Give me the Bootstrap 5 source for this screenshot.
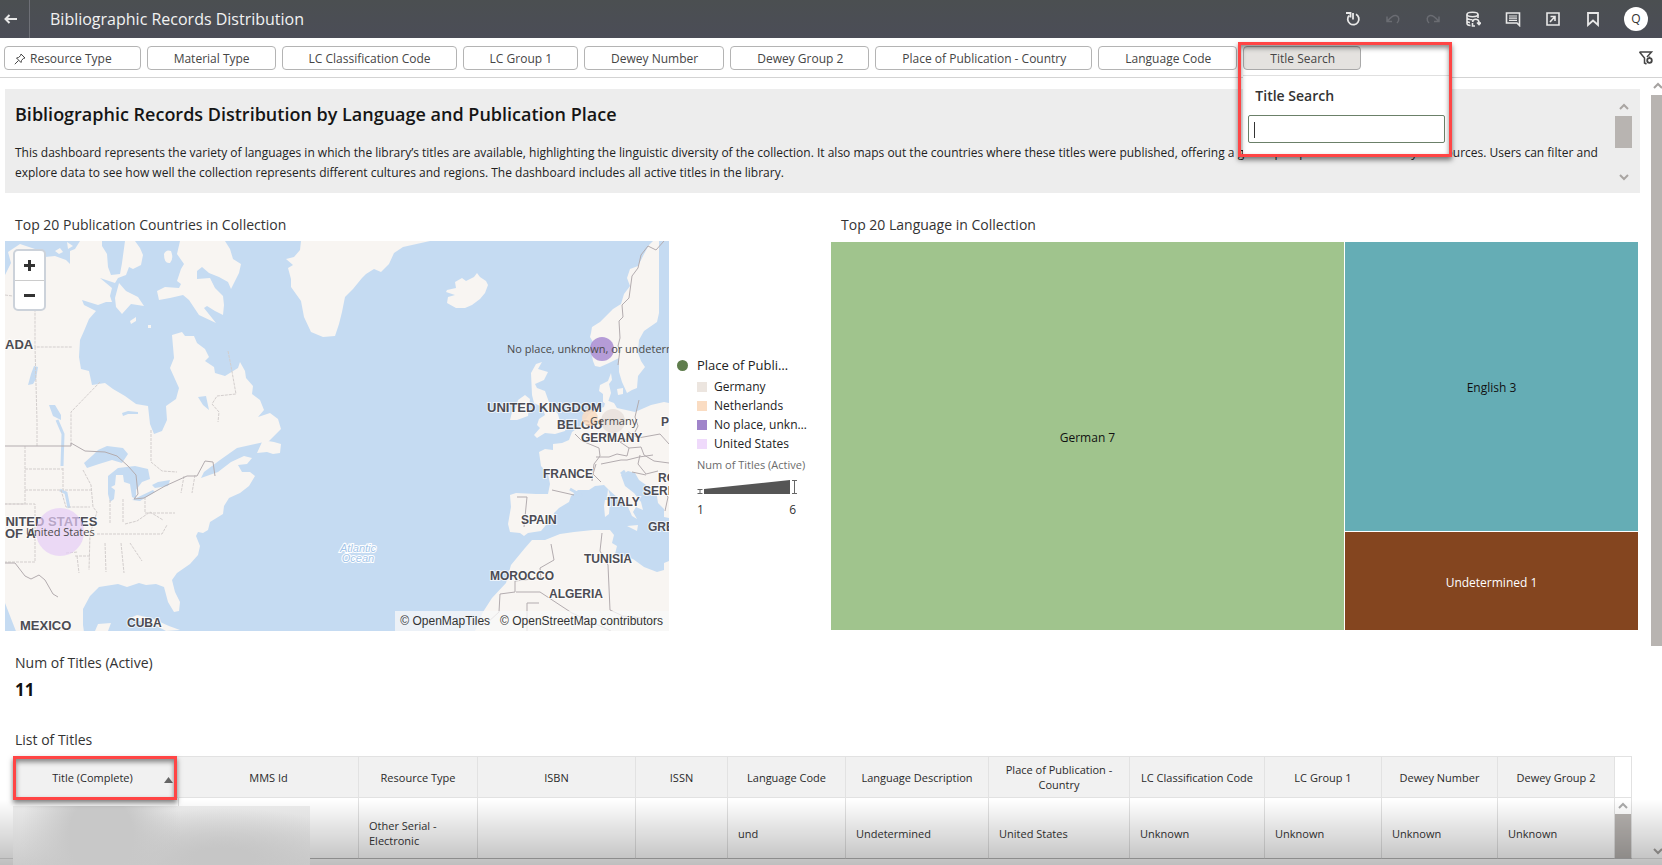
<!DOCTYPE html>
<html lang="en">
<head>
<meta charset="utf-8">
<meta name="viewport" content="width=device-width, initial-scale=1">
<title>Bibliographic Records Distribution</title>
<link href="https://cdn.jsdelivr.net/npm/bootstrap@5.3.0/dist/css/bootstrap.min.css" rel="stylesheet">
<style>
  :root { --ink:#222; --rule:#e2e2e2; --alert:#ff4545; }
  body { font-family:"Open Sans","Noto Sans",sans-serif; font-size:12px; line-height:20px; color:var(--ink); background:#fff; }
  button { font-family:inherit; }
  .topbar { height:38px; background:linear-gradient(#4b4f51,#4b4d57); color:#fff; }
  .topbar .btn { color:#e8e8e8; line-height:0; border:0; border-radius:0; }
  .back { width:29px; height:38px; text-align:left; }
  .topbar h1 { font-size:16px; line-height:38px; padding-left:20px; border-left:1px solid #6d6f76; color:#f2f2f2; }
  .tool { width:40px; height:36px; }
  .topbar .tool:disabled { color:#6a6c72; opacity:1; }
  .topbar .avatar { width:24px; height:24px; background:#fff; color:#333; font-size:12px; margin:0 14px 0 11px; }
  .filterbar { height:40px; padding:8px 8px 0 4px; gap:6px; border-bottom:1px solid #d3d3d3; }
  .chip { height:24px; padding:2px 25px 0 26px; font-size:12px; line-height:20px; color:#454545; border:1px solid #b4b4b4; border-radius:4px; background:#fff; white-space:nowrap; }
  .chip.pinned { padding:2px 28px 0 9px; }
  .chip.open { background:#e4e2df; border-color:#a9a9a9; }
  .search-wrap { position:relative; }
  .search-pop { position:absolute; top:29px; left:0; width:207px; height:80px; z-index:5; background:#fff; border-top:1px solid #e0e0e0; padding:10px 5px 0; }
  .search-pop label { font-size:14px; font-weight:600; line-height:20px; padding-left:7px; color:#333; }
  .search-pop input { height:28px; margin-top:9px; padding:0 5px; font-size:14px; border:1px solid #6b8069; border-radius:2px; box-shadow:none; }
  .callout { position:absolute; border:3px solid var(--alert); box-shadow:0 3px 5px rgba(0,0,0,.5), inset 0 3px 5px rgba(0,0,0,.45); pointer-events:none; z-index:6; }
  .callout-search { left:-5px; top:-4px; width:214px; height:115px; }
  .callout-title { left:0; top:0; width:164px; height:44px; }
  .caret-line { position:absolute; left:11px; top:46px; width:1px; height:16px; background:#333; }
  .board { padding:11px 22px 0 5px; }
  .about { height:104px; background:#ededed; padding:13px 8px 0 10px; }
  .about h2 { font-size:18px; font-weight:600; line-height:24px; color:#151515; margin-bottom:17px; }
  .about p { max-width:1590px; margin:0; }
  .vscroll { width:17px; color:#a9a5a2; }
  .thumb { background:#b8b4b1; }
  .viz-title { font-size:14px; font-weight:400; line-height:20px; color:#333; padding-left:10px; margin:0; }
  .charts { padding-top:22px; }
  .chart-left { flex:826 1 0; min-width:0; }
  .chart-right { flex:807 1 0; min-width:0; margin-right:2px; }
  .map-pane { flex:1 1 0; min-width:0; position:relative; }
  .chart-body { height:390px; margin-top:6px; }
  .map-pane svg.map { display:block; width:100%; height:390px; }
  .zoomer { position:absolute; left:8px; top:8px; width:33px; background:#fff; border:2px solid #ccd2da; border-radius:5px; }
  .zoomer button { height:29px; border:0; background:none; padding:0; line-height:0; color:#333; }
  .zoomer button + button { border-top:1px solid #ccc; }
  .credits { position:absolute; right:0; bottom:0; background:rgba(248,248,248,.75); font:12px/20px "Liberation Sans",sans-serif; padding:0 6px 0 5px; white-space:nowrap; }
  .credits a { color:#333; text-decoration:none; }
  .credits a + a { margin-left:10px; }
  .legend { flex:0 0 162px; padding:114px 0 0 8px; white-space:nowrap; }
  .legend-head { font-size:13px; }
  .dot { width:11px; height:11px; border-radius:50%; background:#5f7d4c; margin-right:9px; }
  .legend ul { margin:2px 0 0 20px; }
  .legend li { line-height:19px; }
  .swatch { width:10px; height:10px; margin-right:7px; }
  .g1{background:#ece5df}.g2{background:#fadcc2}.g3{background:#a084ca}.g4{background:#efdafb}
  .size-key { margin:2px 0 0 20px; color:#6b6b6b; font-size:11px; }
  .size-ends { width:99px; color:#333; font-size:12px; padding-top:4px; }
  .treemap { gap:1px; height:389px; padding-top:1px; }
  .treemap > div, .tile { padding-top:4px; }
  .tree-a { flex:513 1 0; background:#a0c48d; }
  .treemap > .tree-b { flex:293 1 0; gap:1px; padding-top:0; }
  .tile-en { flex:291 1 0; background:#65adb5; }
  .tile-un { flex:96 1 0; background:#84451f; color:#fff; }
  .treemap { color:#111; }
  .kpi { padding:22px 0 0; }
  .kpi strong { display:block; font-size:17px; line-height:24px; padding:5px 0 0 10px; color:#111; }
  .list { padding:28px 8px 0 8px; }
  .list .viz-title { padding-left:2px; }
  .grid-wrap { position:relative; margin-top:6px; }
  .titles { table-layout:fixed; width:100%; font-size:11px; line-height:15px; border-collapse:separate; border-spacing:0; border-top:1px solid var(--rule); }
  .titles th { height:41px; font-weight:400; text-align:center; vertical-align:middle; background:#f1f1f1; border-right:1px solid var(--rule); border-bottom:1px solid var(--rule); padding:0 12px; color:#2a2a2a; }
  .titles th.gutter { background:#fff; padding:0; }
  .titles td { height:61px; vertical-align:middle; padding:10px 10px 0; border-right:1px solid var(--rule); border-bottom:1px solid #cfcfcf; color:#333; }
  .titles td.gutter { padding:0; vertical-align:top; }
  .titles th:first-child { border-right-color:#f1f1f1; position:relative; padding-right:18px; }
  .titles button { border:0; background:none; padding:0; color:inherit; }
  .sort { position:absolute; right:5px; top:16px; }
  .c1{width:166px}.c2{width:180px}.c3{width:119px}.c4{width:158px}.c5{width:92px}.c6{width:118px}.c7{width:143px}.c8{width:141px}.c9{width:135px}.c10{width:117px}.c11{width:116px}.c12{width:117px}.c13{width:17px}
  .masked { position:absolute; left:0; top:50px; width:297px; height:60px; z-index:4;
    background:radial-gradient(ellipse 80px 100px at 88px 30px,#c8c8c8 40%,rgba(200,200,200,0) 100%),radial-gradient(ellipse 150px 50px at 210px 52px,#c6c6c6 20%,rgba(198,198,198,0) 100%),linear-gradient(#e8e8e8,#cbcbcb); }
  .fade-foot { position:fixed; left:0; right:0; bottom:0; height:66px; z-index:3; background:linear-gradient(rgba(0,0,0,0),rgba(0,0,0,.25)); pointer-events:none; }
  .fade-foot::after { content:""; position:absolute; left:0; right:0; bottom:6px; height:1px; background:rgba(0,0,0,.12); }
  .page-scroll { position:fixed; right:0; top:79px; bottom:6px; width:11px; color:#a5a2a0; overflow:hidden; }
  .page-scroll .thumb { height:551px; }
</style>
</head>
<body class="vh-100 overflow-hidden">
<header class="topbar d-flex align-items-center">
  <button class="btn back p-0 ps-1" aria-label="Back"><svg width="14" height="10" viewBox="0 0 14 10" fill="none" stroke="currentColor" stroke-width="2"><path d="M13 5H2M5.500 1 1.500 5l4 4"/></svg></button>
  <h1 class="m-0 me-auto">Bibliographic Records Distribution</h1>
  <button class="btn tool p-0" aria-label="Restart"><svg width="16" height="16" viewBox="0 0 16 16" fill="none" stroke="currentColor" stroke-width="1.800"><path d="M8 2v6.500M11 3.200A5.600 5.600 0 1 1 4 4.500M1 2h4.500v4.500"/></svg></button>
  <button class="btn tool p-0" disabled aria-label="Undo"><svg width="14" height="12" viewBox="0 0 14 12" fill="none" stroke="currentColor" stroke-width="1.500"><path d="M1 3.500v5h5M1.500 8C4 5 7 2 10 2.500c3 .7 4 4.500 1 7.500"/></svg></button>
  <button class="btn tool p-0" disabled aria-label="Redo"><svg width="14" height="12" viewBox="0 0 14 12" fill="none" stroke="currentColor" stroke-width="1.500"><path d="M13 3.500v5H8M12.500 8C10 5 7 2 4 2.500c-3 .7-4 4.500-1 7.500"/></svg></button>
  <button class="btn tool p-0" aria-label="Refresh data"><svg width="16" height="16" viewBox="0 0 16 16" fill="none" stroke="currentColor" stroke-width="1.600"><ellipse cx="7.500" cy="3.500" rx="5.500" ry="2.200"/><path d="M2 3.500v9c0 1 1.500 1.800 3.500 2M13 3.500V7M2 6.700c.5 1.300 3 2 5.500 2M2 10c.4.800 1.500 1.400 3 1.600M7.500 11a3.300 3.300 0 0 1 6.500 0v2M12 11.500l2 2 2-2M7.500 12v3h2.500"/></svg></button>
  <button class="btn tool p-0" aria-label="Comments"><svg width="16" height="16" viewBox="0 0 16 16" fill="none" stroke="currentColor"><path stroke-width="1.600" d="M1.500 2h13v12.500L12 12H1.500z"/><path stroke-width="1.200" d="M4 5h8M4 7.200h8M4 9.400h8"/></svg></button>
  <button class="btn tool p-0" aria-label="Open in window"><svg width="16" height="16" viewBox="0 0 16 16" fill="none" stroke="currentColor" stroke-width="1.600"><path d="M2 2h12v12H2zM5.500 5.500H10V10M10 5.500l-5 5.500"/></svg></button>
  <button class="btn tool p-0" aria-label="Bookmark"><svg width="14" height="16" viewBox="0 0 14 16" fill="none" stroke="currentColor" stroke-width="1.800"><path d="M2 2h10v12L7 9.500 2 14z"/></svg></button>
  <button class="btn avatar rounded-circle p-0 d-flex align-items-center justify-content-center">Q</button>
</header>

<nav class="filterbar d-flex align-items-start" aria-label="Filters">
  <button class="chip pinned d-flex align-items-center"><svg class="me-1" width="12" height="12" viewBox="0 0 12 12" fill="none" stroke="currentColor"><path d="M7 1l4 4-1.500.3L7.500 7.500 7 9.500 2.500 5l2-.5 2.200-2zM4.500 7.500.800 11.200"/></svg>Resource Type</button>
  <button class="chip">Material Type</button>
  <button class="chip">LC Classification Code</button>
  <button class="chip">LC Group 1</button>
  <button class="chip">Dewey Number</button>
  <button class="chip">Dewey Group 2</button>
  <button class="chip">Place of Publication - Country</button>
  <button class="chip">Language Code</button>
  <div class="search-wrap">
    <button class="chip open">Title Search</button>
    <div class="search-pop">
      <label for="titleSearch" class="d-block">Title Search</label>
      <input id="titleSearch" type="text" class="form-control">
      <span class="caret-line"></span>
    </div>
    <div class="callout callout-search"></div>
  </div>
  <button class="btn p-0 ms-auto border-0 lh-1" aria-label="Filter settings"><svg width="16" height="22" viewBox="0 0 16 22" fill="none" stroke="#444" stroke-width="1.500"><path d="M1.500 6h12L9 11M1.500 6l5 6v5l2 1"/><circle cx="11.500" cy="14.500" r="2.300" stroke-width="1.800"/><path d="M11.500 10.500v2"/></svg></button>
</nav>

<main class="board">
  <section class="about d-flex">
    <div class="flex-grow-1">
      <h2>Bibliographic Records Distribution by Language and Publication Place</h2>
      <p>This dashboard represents the variety of languages in which the library’s titles are available, highlighting the linguistic diversity of the collection. It also maps out the countries where these titles were published, offering a global perspective on the library’s resources. Users can filter and explore data to see how well the collection represents different cultures and regions. The dashboard includes all active titles in the library.</p>
    </div>
    <div class="vscroll d-flex flex-column align-items-center">
      <svg width="10" height="14" viewBox="0 0 10 14" fill="none" stroke="currentColor" stroke-width="2"><path d="M1 7l4-4 4 4"/></svg>
      <div class="thumb w-100" style="height:32px"></div>
      <svg class="mt-4" width="10" height="10" viewBox="0 0 10 10" fill="none" stroke="currentColor" stroke-width="2"><path d="M1 3l4 4 4-4"/></svg>
    </div>
  </section>

  <section class="charts d-flex">
    <div class="chart-left">
      <h3 class="viz-title">Top 20 Publication Countries in Collection</h3>
      <div class="chart-body d-flex">
        <div class="map-pane">
          <svg class="map" viewBox="5 241 664 390" preserveAspectRatio="xMidYMid slice" role="img" aria-label="Map of publication countries">
            <rect x="-400" y="241" width="1500" height="390" fill="#c5dbf2"/>
            <g fill="#f8f5f2">
              <path d="M5 275l6-12-3-11 12-8 24 8 1 5 10-1 11 4 4 4 0-13 5-2 5-8h22l0 5 5 8 1 13 3 8 9-1 2-11 3-22h10l5 7 3 7-2 10-8 4-4-2-3 8-8 3-3 5-15-5 12 10-2 8 2 6-6 0-8 3-16-5 2 5 12 6-7 8-5 12-4 9-1 17 2 12 8 2 3 14 13-2 8 6 12 7 11 8 12 2 2 18 4 10 8-3 5-11-1-14 10-7 3-11-9-20 4-10-2-23 10-3 3 4 9 0 3 7 8 6 4 8-4 4 9 6 1 6 10 3 13-8 2-6 5 9 1 7 7 8-1 8 8 6 4 10-6 7 12-4 8 6 3 10-12 12-14 3-18 4-17 12-16 12-3 6 17-6 13-10 13-6 8 2-5 6-9 1 4 7 8 0 5 4-6 10-9 7-11 5-5 8-1 8-13 8-2 8-5 3-5-1-2 4 4 10-2 9-8 9-13 9-5 7 3 12 5 10-1 9-5 1-6-10-4-15-8-3-10 1-7-2-12 4-9-3-19 3-9 9-7 13 0 16 2 14H19L5 603z"/>
              <path d="M216 483l5-7 8-3 11-2 3 3-12 4-9 6-5 0zM257 453l5-11 7-14 2 2-3 11 6 1 7 2-1 9-7 1-6-2zM227 441l6-1 8 3-5 1z"/>
              <path d="M180 241h45l5 8 3 10 8 5-2 9-8 16-3-7-9-5-10-4-7-6-5 4 0 8 13-1 5 10 8 8 1 9-1 10-8-4-8-5-3 2 12 15-17-8-10-15-6-5-13 3-11 2-2-9 8-4 14 1 2-4-4-3 4-12 3-5-7-10z"/>
              <path d="M119 283l7 8 12 6 6 9-13-2-9 10-6-7-1-9zM130 321l6-4 0 4-5 3zM148 325l3 0 0 3-3 0zM164 254q2-5 7-3 3 8-1 12-6 1-6-9zM55 251l5-3 3 4-4 2zM67 242l6 4-5 3z"/>
              <path d="M301 241l-1 9-6 7-8 2 7 6-5 3 3 11 0 8 10 14 3 16 7 15 12 5 12-1 4-12 3-12 3-15 8-8 9-11 4-4 8-5 7 3 8-8 5-11 9-6 27-6z"/>
              <path d="M447 290l9-2-1-6 7-4 4 3 8-4 3-4 3 4 6 4 2 4-3 8-5 6-8 6-7 3-9 0-9-5 1-6 7-2-9-3z"/>
              <path d="M653 241l-4 4-5 9-6 12-8 3-3 9 3 8-6 8-3 10-8 5-13 13-8 5-1 6-1 4 3 5-2 9 2 10 2 5 5 1 9-4 10-5 0 14 3 10 5 11 5-3 5-2 1-12 7-9-4-6-3-8 1-13 5-9 13-9 2-9V241z"/>
              <path d="M531 373l5-9 6-2-4 7 10 3-4 8-9 4 2 4 8 3 5 14 8 9 2 8 7 4-2 5-10 3-10-1-8 5-3-3 6-7-3-3 2-6 6-4-3-8-8-4-2-8zM518 400l7-5 5 4-2 17-11 4-7 0 2-8 4-4zM600 385l8-4 3-8 1 7-3 4 2 9-4 12-4-3 0-8-4-3zM617 389l6-1 0 6-5 1z"/>
              <path d="M539 452l6-3 8 1 0-6 9-1 7-3 3-8 11-8 6-10 9-5 6-2 2-7 8 3 3 5 18 4 16-7 13-3 5 1V518l-5-1 0-8-6-6-2-13-10-5-7-5-4-7-7-2-7 4 4 11 9 7 7 9 2 8-7-3-3 5 4 7-5-3-4-9-10-9-8-7-6-6-9 1-6 4-11 0-7 6-2 6-10 6-5 5-1 6-7 6-5 6-13 2-4 3-4-3-10-1-2-8 3-17-1-12 6-2 20 1 12 0 2-10-2-10-7-8z"/>
              <path d="M532 540l13 0 15-6 14-2 19-2 17 0 4 5-2 8 5 3-2 8 18 5 11 8 13 5 7-2 0-7 5-2V631H475l8-19 9-14 14-15 5-18 14-17zM605 500l5 0-1 14-4 3-1-11zM627 526l11-1-1 6zM608 489l2 6-3 3z"/>
              <path d="M95 631l3-7 13-1-3 8zM128 619l9-4 14 3 18 8 11 4-14 1-15-8z"/>
            </g>
            <g fill="#c5dbf2">
              <path d="M84 463l9-8 5-5 9-4 16 2 5 6-6 9-10-3-13 4-12 4zM108 476l10-8 17-2 13 3 2 10-8 3-6 8 0 9-4-2-2-13-6-2-1-7-7 0-1 10-4 2 4 3-1 9-4 3-2-8zM132 500l21-10 2 2-15 9zM152 485l6-3 12-2-2 6-13 2zM34 366l4 1-2 12-3 5-5 1 3-11zM49 405l6 0 6 10 0 5-8-4zM198 397l8-1 3 14-6-5zM122 413l6-2 10 1 0 2-10 0-5 2z"/>
            </g>
            <path d="M57 420l6 14-1 32M60 490l6 3 3 15M625 471l-4 3M570 489l12 7" fill="none" stroke="#c5dbf2" stroke-width="3"/>
            <g fill="none" stroke="#d3cecd" stroke-dasharray="3 1">
              <path d="M5 295l30 4v48h37M35 347l2 74v25M100 382l-29 30v34M151 430v32l11 9 15 1M228 351l3 15 5 28-19 2-5 8 7 8-1 10M25 446v58H5M25 469h38M25 490h36l5 17h24M5 504h30v58H5M63 468v22h28M83 470l8 15 2 22 4 5-7 22-1 36M110 500v23M123 499v24M145 497v16h30M97 534h65l5-9M105 543l1 29M121 543l3 30M130 543l12 18M75 556h15M77 556l2 17M184 476l-3 17M195 475l-3 18M125 524l12-3 13-9 13 8M66 553l12-1"/>
            </g>
            <g fill="none" stroke="#b3acaf">
              <path d="M5 446h66v-3l14 8 20 1 12 4 11 10 8 9 2 19-4 5 10-1 21-12 22-10h10l8-15 8 1 2 14M5 563h10l10 13 6 3 8-4 6 5 8 14 5 3M664 241l-8 9-8-4-7 9-3 13-6 8-3 22-7 7 1 12-4 4 1 17-2 8 2 4-2 15"/>
              <path d="M517 497h10l-3 30M552 490l22 5M575 434l7 7 17 7 1 8-6 8-2 17M596 457l13 0 8-3 10 2 2-8-9-6 13-6 5-10-3-9 4-17M628 432l10 6 22-4 9 10M596 464l-3 10 8 8M601 464l20-4 6 0 12-3 14-2M629 448l12-1 3 8 10 6 15 2M632 472l14 3M640 455l-2 9 8 10 12-3M663 491l5 6-3 14M551 544l3 16-14 8 1 10-26 3v11l-15 2-1 18-12 11M516 592h24l32 21 39 18M527 631v-28h12M602 533l-2 18 8 14 2 45 13 6 20 2"/>
            </g>
            <g font-family="Liberation Sans, sans-serif" font-weight="700" font-size="13" fill="#4c4c54" stroke="#fff" stroke-width="2" stroke-opacity=".7" paint-order="stroke">
              <text x="5" y="349">ADA</text><text x="-4" y="526">UNITED STATES</text><text x="5" y="538">OF A</text>
              <text x="20" y="630">MEXICO</text><text x="127" y="627" font-size="12">CUBA</text>
              <text x="487" y="412">UNITED KINGDOM</text><text x="557" y="429" font-size="12">BELGIU</text><text x="581" y="442" font-size="12">GERMANY</text>
              <text x="543" y="478" font-size="12">FRANCE</text><text x="607" y="506" font-size="12">ITALY</text><text x="521" y="524" font-size="12">SPAIN</text>
              <text x="584" y="563" font-size="12">TUNISIA</text><text x="490" y="580" font-size="12">MOROCCO</text><text x="549" y="598" font-size="12">ALGERIA</text>
              <text x="661" y="426" font-size="12">POLAND</text><text x="658" y="482" font-size="12">ROMANIA</text><text x="643" y="495" font-size="12">SERBIA</text><text x="648" y="531" font-size="12">GREECE</text>
            </g>
            <g font-family="Liberation Sans, sans-serif" font-size="11" font-style="italic" fill="#a4c6ea" stroke="#fff" stroke-width="2" paint-order="stroke" text-anchor="middle"><text x="358" y="552">Atlantic</text><text x="358" y="562">Ocean</text></g>
            <circle cx="60" cy="532" r="24" fill="#e6cdf7" fill-opacity=".7"/>
            <circle cx="602" cy="349" r="12" fill="#a98cd2" fill-opacity=".85"/>
            <circle cx="590" cy="418" r="8" fill="#fadcc2" fill-opacity=".85"/>
            <circle cx="613" cy="421" r="12" fill="#e6dfda" fill-opacity=".8"/>
            <g font-family="Open Sans, sans-serif" font-size="11" fill="#4a4a4a"><text x="26" y="536">United States</text><text x="507" y="353">No place, unknown, or undetermined</text><text x="590" y="425">Germany</text></g>
          </svg>
          <div class="zoomer d-flex flex-column">
            <button aria-label="Zoom in"><svg width="13" height="13" stroke="currentColor" stroke-width="3"><path d="M1 6.500h11M6.500 1v11"/></svg></button>
            <button aria-label="Zoom out"><svg width="13" height="13" stroke="currentColor" stroke-width="3"><path d="M1 6.500h11"/></svg></button>
          </div>
          <div class="credits"><a href="#">© OpenMapTiles</a><a href="#">© OpenStreetMap contributors</a></div>
        </div>
        <div class="legend">
          <div class="legend-head d-flex align-items-center"><span class="dot"></span>Place of Publi…</div>
          <ul class="list-unstyled mb-0">
            <li class="d-flex align-items-center"><span class="swatch g1"></span>Germany</li>
            <li class="d-flex align-items-center"><span class="swatch g2"></span>Netherlands</li>
            <li class="d-flex align-items-center"><span class="swatch g3"></span>No place, unkn…</li>
            <li class="d-flex align-items-center"><span class="swatch g4"></span>United States</li>
          </ul>
          <div class="size-key">
            <div>Num of Titles (Active)</div>
            <svg class="d-block mt-1" width="100" height="17" viewBox="0 0 100 17" fill="none" stroke="#666"><path d="M7 10l86-9v14H7z" fill="#555" stroke="none"/><path d="M.5 10.500h5M3 10.500v4M.5 14.500h5M95 1.500h5M97.500 1.500v13M95 14.500h5"/></svg>
            <div class="size-ends d-flex justify-content-between"><span>1</span><span>6</span></div>
          </div>
        </div>
      </div>
    </div>
    <div class="chart-right">
      <h3 class="viz-title">Top 20 Language in Collection</h3>
      <div class="chart-body">
        <div class="treemap d-flex">
          <div class="tree-a d-flex align-items-center justify-content-center">German 7</div>
          <div class="tree-b d-flex flex-column">
            <div class="tile tile-en d-flex align-items-center justify-content-center">English 3</div>
            <div class="tile tile-un d-flex align-items-center justify-content-center">Undetermined 1</div>
          </div>
        </div>
      </div>
    </div>
  </section>

  <section class="kpi">
    <h3 class="viz-title">Num of Titles (Active)</h3>
    <strong>11</strong>
  </section>

  <section class="list">
    <h3 class="viz-title">List of Titles</h3>
    <div class="grid-wrap">
      <table class="titles">
        <colgroup><col class="c1"><col class="c2"><col class="c3"><col class="c4"><col class="c5"><col class="c6"><col class="c7"><col class="c8"><col class="c9"><col class="c10"><col class="c11"><col class="c12"><col class="c13"></colgroup>
        <thead><tr>
          <th>Title (Complete)<button class="sort lh-1" aria-label="Sorted ascending"><svg width="9" height="6" viewBox="0 0 9 6"><path d="M0 6 4.500 0 9 6z" fill="#666"/></svg></button></th>
          <th>MMS Id</th><th>Resource Type</th><th>ISBN</th><th>ISSN</th><th>Language Code</th><th>Language Description</th><th>Place of Publication - Country</th><th class="px-0">LC Classification Code</th><th>LC Group 1</th><th>Dewey Number</th><th>Dewey Group 2</th><th class="gutter"></th>
        </tr></thead>
        <tbody><tr>
          <td></td><td></td><td>Other Serial - Electronic</td><td></td><td></td><td>und</td><td>Undetermined</td><td>United States</td><td>Unknown</td><td>Unknown</td><td>Unknown</td><td>Unknown</td>
          <td class="gutter"><svg class="d-block mx-auto" width="10" height="16" viewBox="0 0 10 16" fill="none" stroke="#aaa" stroke-width="2"><path d="M1 10l4-4 4 4"/></svg><div class="thumb" style="height:44px"></div></td>
        </tr></tbody>
      </table>
      <div class="callout callout-title"></div>
      <div class="masked"></div>
    </div>
  </section>
</main>

<div class="page-scroll d-flex flex-column">
  <svg class="flex-shrink-0" width="11" height="16" viewBox="0 0 11 16" fill="none" stroke="currentColor" stroke-width="2"><path d="M3 9l4-4 4 4"/></svg>
  <div class="thumb"></div>
  <svg class="mt-auto flex-shrink-0" width="11" height="16" viewBox="0 0 11 16" fill="none" stroke="currentColor" stroke-width="2"><path d="M3 6l4 4 4-4"/></svg>
</div>
<div class="fade-foot"></div>
<script src="https://cdn.jsdelivr.net/npm/bootstrap@5.3.0/dist/js/bootstrap.bundle.min.js"></script>
</body>
</html>
